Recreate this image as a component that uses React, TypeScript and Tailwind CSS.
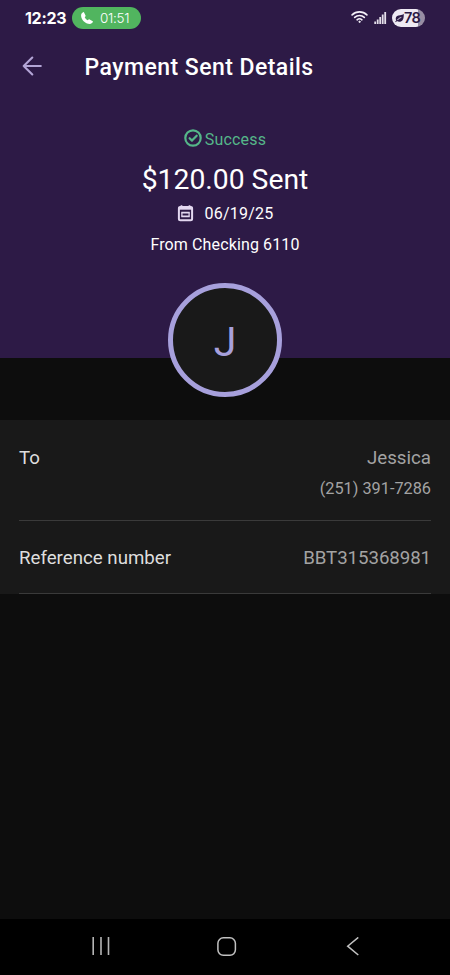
const ROBOTO = "font-['Roboto',sans-serif]"

const transfer = {
  status: 'Success',
  amount: '$120.00 Sent',
  date: '06/19/25',
  source: 'From Checking 6110',
  recipient: 'Jessica',
  phone: '(251) 391-7286',
  reference: 'BBT315368981',
}

const StatusBar = () => (
  <div className="flex h-9 items-center justify-between pl-[25px] pr-[25px] font-['Inter',sans-serif]">
    <div className="flex items-center">
      <span className="w-[47px] whitespace-nowrap text-[16px] font-bold leading-5 tracking-[-0.3px] text-white">12:23</span>
      <div className="flex h-[22px] w-[69px] items-center rounded-full bg-[#51b55f] pl-[9px]">
        <svg className="h-[12px] w-[12px] fill-white" viewBox="3 3 18 18">
          <path d="M7.400 3.400 9.800 8.100c.3.6.2 1.100-.2 1.600L8.600 11c1.100 2 2.500 3.400 4.500 4.500l1.300-1.100c.5-.4 1-.5 1.600-.2l4.600 2.500c.4.200.5.600.3 1-1 2-2.600 3.200-4.700 3.200C9.200 20.900 3.100 14.500 3.100 7.900c0-2.100 1.200-3.700 3.300-4.700.4-.2.8-.2 1 .2z" />
        </svg>
        <span className="ml-[7px] text-[13.5px] font-light leading-5 tracking-[-0.3px] text-white">01:51</span>
      </div>
    </div>
    <div className="flex items-center">
      <svg className="mb-[2px] h-[14px] w-[17px]" viewBox="0 0 17 14" fill="none" stroke="#f4f0f8" strokeWidth="1.6" strokeLinecap="round">
        <path d="M1.100 4.900a10.600 10.600 0 0 1 14.800 0M3.700 7.400a7 7 0 0 1 9.600 0M6.100 9.800a3.600 3.600 0 0 1 4.800 0" />
        <circle cx="8.5" cy="11.8" r="0.7" fill="#f4f0f8" strokeWidth="0.8" />
      </svg>
      <svg className="ml-[6px] h-[14px] w-[13px] fill-[#e4dfea]" viewBox="0 0 13 14">
        <rect x="0.3" y="10.5" width="1.8" height="2.5" />
        <rect x="2.8" y="8.5" width="1.8" height="4.5" />
        <rect x="5.3" y="6" width="1.8" height="7" />
        <rect x="7.8" y="3.5" width="1.8" height="9.5" />
        <rect x="10.3" y="1" width="1.8" height="12" />
      </svg>
      <div className="ml-[5px] flex h-[18px] w-[33px] items-center rounded-full bg-linear-to-r from-[#eeeaf3] from-78% to-[#978da3] to-78% pl-[3px]">
        <svg className="h-[10px] w-[9px] shrink-0" viewBox="0 0 9 10">
          <path d="M8.700.8C9 5.400 7.900 8.700 4.300 8.700c-1 0-1.700-.2-2.300-.6L.8 9.200.2 8.500l1-1C-.4 3.500 2.400 2.200 5 2.200c1.600 0 2.700-.4 3.700-1.400z" fill="#2d1b46" />
          <path d="M2.300 7.100C3.500 5.600 4.700 4.900 6.300 4.400" stroke="#eeeaf3" strokeWidth="0.9" fill="none" />
        </svg>
        <span className="text-[14.5px] font-semibold leading-[18px] tracking-[-0.7px] text-[#2d1b46]">78</span>
      </div>
    </div>
  </div>
)

const AppBar = () => (
  <div className="flex h-[60px] items-center pl-[22px]">
    <svg className="h-5 w-5" viewBox="0 0 20 20" fill="none" stroke="#b3a5d6" strokeWidth="2.1" strokeLinecap="round" strokeLinejoin="round">
      <path d="M18.800 10H1.700M10.300 1.500 1.700 10l8.600 8.500" />
    </svg>
    <h1 className="ml-[42.5px] whitespace-nowrap pt-[3px] text-[23px] font-medium leading-8 tracking-[0.46px] text-white">
      Payment Sent Details
    </h1>
  </div>
)

const Summary = () => (
  <div className="flex flex-col items-center pt-[30px] text-white">
    <div className="flex h-6 items-center gap-[3px] text-[#55b689]">
      <svg className="h-[18px] w-[18px]" viewBox="0 0 18 18" fill="none" stroke="currentColor" strokeWidth="2.2" strokeLinecap="round" strokeLinejoin="round">
        <circle cx="9" cy="9" r="7.7" />
        <path d="m5.600 9.200 2.400 2.400 4.700-4.900" />
      </svg>
      <span className="pt-[3px] text-[16px] tracking-[0.2px]">{transfer.status}</span>
    </div>
    <div className="mt-[9px] h-10 pt-px text-[28.3px] leading-10">{transfer.amount}</div>
    <div className="mt-[2px] flex h-6 items-center gap-[11px]">
      <svg className="h-[17px] w-[17px]" viewBox="0 0 17 17" fill="none" stroke="#e3d8f0">
        <rect x="1.9" y="2.1" width="13.2" height="13.2" rx="1.5" strokeWidth="2" />
        <path d="M1.500 3.200h14" strokeWidth="3" />
        <path d="M4.500.3v2M12.500.3v2" strokeWidth="1.7" />
        <path d="M4.300 7.600h8.400M4.300 11.400h8.400" strokeWidth="1.6" />
        <path d="M4.900 7.600v3.800M12.100 7.600v3.800" strokeWidth="1.2" />
      </svg>
      <span className="pt-[2px] text-[16px] tracking-[0.2px]">{transfer.date}</span>
    </div>
    <div className="mt-2 h-6 text-[16px] leading-6 tracking-[0.13px]">{transfer.source}</div>
  </div>
)

const App = () => {
  return (
    <div className={`flex h-[975px] w-[450px] flex-col overflow-hidden bg-[#0d0d0d] ${ROBOTO}`}>
      <header className="relative h-[358px] shrink-0 bg-[#2d1a46]">
        <StatusBar />
        <AppBar />
        <Summary />
        {/* Avatar overlaps the bottom edge of the header */}
        <div className="absolute left-[168px] top-[283px] flex h-[114px] w-[114px] items-center justify-center rounded-full border-[5px] border-[#a7a0dc] bg-[#191919]">
          <span className="pt-[5px] text-[41px] leading-none text-[#a7a0dc]">J</span>
        </div>
      </header>

      {/* Details */}
      <section className="mt-[62px] h-[174px] shrink-0 bg-[#191919] px-[19px] text-[18.7px] leading-6">
        <div className="flex h-[101px] justify-between border-b border-[#3a3a3a] pt-[26px]">
          <span className="text-[#dedede]">To</span>
          <div className="flex flex-col items-end text-[#a3a3a3]">
            <span>{transfer.recipient}</span>
            <span className="mt-[7px] text-[16.3px]">{transfer.phone}</span>
          </div>
        </div>
        <div className="flex h-[73px] items-center justify-between border-b border-[#3a3a3a] pt-px">
          <span className="text-[#dedede]">Reference number</span>
          <span className="tracking-[-0.08px] text-[#a3a3a3]">{transfer.reference}</span>
        </div>
      </section>

      {/* System navigation */}
      <nav className="mt-auto flex h-14 items-center bg-black">
        <svg className="ml-[91px] h-5 w-5" viewBox="0 0 20 20" stroke="#b5b5b5" strokeWidth="1.6">
          <path d="M2.200 0v18M10 0v18M17.500 0v18" />
        </svg>
        <svg className="ml-[106px] h-5 w-5" viewBox="0 0 20 20" fill="none" stroke="#c2c2c2" strokeWidth="1.5">
          <rect x="0.9" y="0.8" width="17.5" height="17.5" rx="5.5" />
        </svg>
        <svg className="ml-[106px] h-5 w-5" viewBox="0 0 20 20" fill="none" stroke="#c2c2c2" strokeWidth="1.5">
          <path d="M15.300 .4 4.700 9.200l10.600 8.800" />
        </svg>
      </nav>
    </div>
  )
}

export default App
